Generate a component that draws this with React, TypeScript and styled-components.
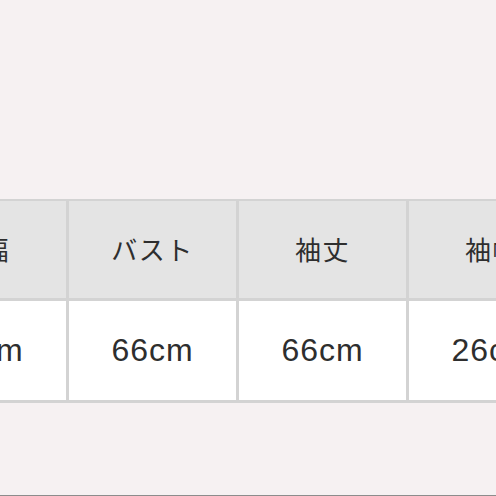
import styled, { createGlobalStyle } from 'styled-components';

const columns = [
  { label: '身幅', value: '56cm' },
  { label: 'バスト', value: '66cm' },
  { label: '袖丈', value: '66cm' },
  { label: '袖幅', value: '26cm' },
];

export default function App() {
  return (
    <>
      <GlobalStyle />
      <Page>
        <SizeTable>
          {columns.map((c) => (
            <HeadCell key={'h' + c.label}>{c.label}</HeadCell>
          ))}
          {columns.map((c) => (
            <BodyCell key={'b' + c.label}>{c.value}</BodyCell>
          ))}
        </SizeTable>
        <FooterLine />
      </Page>
    </>
  );
}

const GlobalStyle = createGlobalStyle`
  html, body {
    margin: 0;
    padding: 0;
    background: #f6f1f2;
    overflow: hidden;
  }
`;

const Page = styled.div`
  display: flex;
  flex-direction: column;
  height: 496px;
  padding-top: 199px;
  box-sizing: border-box;
  overflow: hidden;
`;

const SizeTable = styled.div`
  display: grid;
  grid-template-columns: repeat(4, 167px);
  grid-template-rows: 97px 99px;
  gap: 3px;
  padding: 2px 3px 3px;
  margin-left: -104px;
  width: max-content;
  background: #d3d3d3;
  color: #2e2e2e;
`;

const Cell = styled.div`
  display: flex;
  align-items: center;
  justify-content: center;
`;

const HeadCell = styled(Cell)`
  background: #e4e4e4;
  font-family: 'Noto Sans CJK JP', sans-serif;
  font-size: 26px;
  letter-spacing: 1.5px;
  padding-bottom: 2px;
`;

const BodyCell = styled(Cell)`
  background: #ffffff;
  font-family: 'Liberation Sans', Arial, sans-serif;
  font-size: 32px;
  letter-spacing: 1px;
`;

const FooterLine = styled.div`
  margin-top: auto;
  height: 1px;
  background: #8c8c8c;
`;
